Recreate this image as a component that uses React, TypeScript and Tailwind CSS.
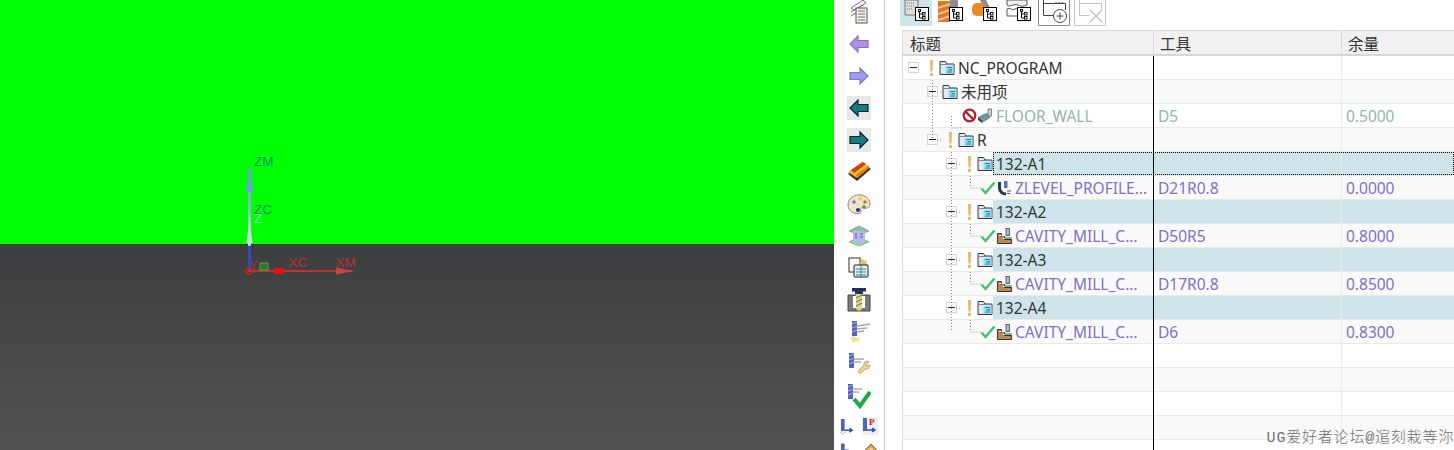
const FONT = 'font-["Noto_Sans","Noto_Sans_CJK_SC",sans-serif]'

type TNode = {
  title: string
  tool?: string
  stock?: string
  depth: number
  kind: 'folder' | 'op' | 'empty'
  warn?: boolean
  opIcon?: 'floor' | 'zlevel' | 'cavity'
  state?: 'ok' | 'blocked'
  active?: boolean
}

const nodes: TNode[] = [
  { title: 'NC_PROGRAM', depth: 0, kind: 'folder', warn: true },
  { title: '未用项', depth: 1, kind: 'folder' },
  { title: 'FLOOR_WALL', tool: 'D5', stock: '0.5000', depth: 3, kind: 'op', opIcon: 'floor', state: 'blocked' },
  { title: 'R', depth: 1, kind: 'folder', warn: true },
  { title: '132-A1', depth: 2, kind: 'folder', warn: true, active: true },
  { title: 'ZLEVEL_PROFILE...', tool: 'D21R0.8', stock: '0.0000', depth: 4, kind: 'op', opIcon: 'zlevel', state: 'ok' },
  { title: '132-A2', depth: 2, kind: 'folder', warn: true, active: true },
  { title: 'CAVITY_MILL_C...', tool: 'D50R5', stock: '0.8000', depth: 4, kind: 'op', opIcon: 'cavity', state: 'ok' },
  { title: '132-A3', depth: 2, kind: 'folder', warn: true, active: true },
  { title: 'CAVITY_MILL_C...', tool: 'D17R0.8', stock: '0.8500', depth: 4, kind: 'op', opIcon: 'cavity', state: 'ok' },
  { title: '132-A4', depth: 2, kind: 'folder', warn: true, active: true },
  { title: 'CAVITY_MILL_C...', tool: 'D6', stock: '0.8300', depth: 4, kind: 'op', opIcon: 'cavity', state: 'ok' },
  { title: '', depth: 0, kind: 'empty' },
  { title: '', depth: 0, kind: 'empty' },
  { title: '', depth: 0, kind: 'empty' },
  { title: '', depth: 0, kind: 'empty' },
]

const depthClass = ['pl-[5px]', 'pl-[24px]', 'pl-[43px]', 'pl-[59px]', 'pl-[77px]']

const Folder = () => (
  <svg width="16" height="16" viewBox="0 0 16 16" className="shrink-0">
    <path d="M1 14.500V1.500h5.500l1.500 2.500h7v10.500z" fill="#dfeaee" stroke="#2f3b40" strokeWidth="1" />
    <path d="M1 4.500h14" stroke="#6f8790" />
    <rect x="6.500" y="6" width="8" height="8" fill="#a4d8e8" />
    <path d="M8 7.500h5M9.500 9.800h3.500M8 12h5" stroke="#0f8ab4" strokeWidth="1.200" />
  </svg>
)

const Warn = () => (
  <svg width="5" height="18" viewBox="0 0 5 18" className="shrink-0">
    <path d="M1 1h3l-.4 11.500H1.400z" fill="#efb56b" />
    <rect x="1" y="14" width="3" height="3" fill="#efb56b" />
  </svg>
)

const Toggle = () => (
  <span className="flex h-[11px] w-[11px] shrink-0 items-center justify-center border border-[#d4d4d4] bg-white">
    <span className="h-px w-[7px] bg-[#222]" />
  </span>
)

const Check = () => (
  <svg width="16" height="14" viewBox="0 0 16 14" className="shrink-0">
    <path d="M1.500 7.500l4 4.500L14.500 1.500" fill="none" stroke="#3fc468" strokeWidth="2.400" />
  </svg>
)

const Blocked = () => (
  <svg width="15" height="15" viewBox="0 0 15 15" className="shrink-0">
    <circle cx="7.500" cy="7.500" r="5.800" fill="#fff" stroke="#b3202c" strokeWidth="2.200" />
    <path d="M3.600 3.600l7.800 7.800" stroke="#b3202c" strokeWidth="2.200" />
  </svg>
)

const OpIcon = ({ type }: { type: TNode['opIcon'] }) => {
  if (type === 'floor') {
    return (
      <svg width="16" height="16" viewBox="0 0 16 16" className="shrink-0">
        <path d="M1 9l8-4 4 2-8 5z" fill="#5f9c9a" />
        <path d="M1 9v3l4 3v-3z" fill="#444" />
        <path d="M5 12v3l8-5V7z" fill="#7d8b8e" />
        <rect x="11" y="1" width="3.500" height="7" fill="#cfd3da" stroke="#555" strokeWidth=".7" />
      </svg>
    )
  }
  if (type === 'zlevel') {
    return (
      <svg width="15" height="16" viewBox="0 0 15 16" className="shrink-0">
        <path d="M2.500 2v6c0 3.500 3 6 6.500 6" fill="none" stroke="#1d3c46" strokeWidth="3" />
        <rect x="7" y="1" width="3.500" height="7" fill="#5a6cc0" />
        <path d="M10 11h4M10 13.500h3" stroke="#555" />
      </svg>
    )
  }
  return (
    <svg width="15" height="16" viewBox="0 0 15 16" className="shrink-0">
      <path d="M.5 5.500h4v3h3v3h7v4H.5z" fill="#b98a4e" stroke="#333" />
      <path d="M2 7.500h4v3h3" fill="none" stroke="#e6cf9a" />
      <rect x="9" y=".5" width="3.500" height="7" fill="#b8bcc0" stroke="#444" strokeWidth=".8" />
      <path d="M8 9h6.500v2H8z" fill="#7fb08c" />
    </svg>
  )
}

const Row = ({ node, index }: { node: TNode; index: number }) => {
  const stripe = index % 2 === 0 ? 'bg-white' : 'bg-[#f9f9f9]'
  const hl = node.active ? 'bg-[#cde4ea]' : ''
  const color =
    node.state === 'blocked' ? 'text-[#93b5a6]' : node.state === 'ok' ? 'text-[#7b72cc]' : 'text-[#333]'

  return (
    <div className={`relative flex h-6 shrink-0 border-b border-[#e9e9e9] text-[15.500px] leading-[25px] ${stripe}`}>
      <div className={`flex w-[250px] shrink-0 items-center ${depthClass[node.depth]}`}>
        {node.kind === 'folder' && (
          <>
            <Toggle />
            {node.warn ? (
              <span className="ml-[10px] mr-[5px] flex">
                <Warn />
              </span>
            ) : (
              <span className="w-[4px]" />
            )}
            <Folder />
          </>
        )}
        {node.state === 'ok' && (
          <span className="flex items-center gap-px">
            <Check />
            <OpIcon type={node.opIcon} />
          </span>
        )}
        {node.state === 'blocked' && (
          <span className="flex items-center">
            <Blocked />
            <OpIcon type={node.opIcon} />
          </span>
        )}
        {node.kind !== 'empty' && (
          <span className={`h-full flex-1 whitespace-nowrap pl-[3px] ${color} ${hl}`}>{node.title}</span>
        )}
      </div>
      <div className={`w-[188px] shrink-0 pl-[5px] ${color} ${hl}`}>{node.tool}</div>
      <div className={`flex-1 border-l border-[#ebebeb] pl-[4px] ${color} ${hl}`}>{node.stock}</div>
      {node.title === '132-A1' && (
        <span className="absolute inset-y-0 left-[90px] right-0 border border-dotted border-black" />
      )}
    </div>
  )
}

// dotted branch lines of the tree, drawn in the coordinates of the table body
const Connectors = () => (
  <svg className="absolute left-0 top-0" width="120" height="300" fill="none" stroke="#888" strokeDasharray="1 2">
    <path d="M10.500 12h5M29.500 24v60M34 36h5M34 84h5" />
    <path d="M48.500 60v12H59" />
    <path d="M48.500 96v180M53 108h5M53 156h5M53 204h5M53 252h5" />
    <path d="M67.500 120v12H78M67.500 168v12H78M67.500 216v12H78M67.500 264v12H78" />
  </svg>
)

const TreeBadge = () => (
  <span className="absolute bottom-[5px] right-[3px] flex h-[14px] w-[14px] items-center justify-center border border-black bg-white">
    <svg width="8" height="11" viewBox="0 0 8 11" fill="none" stroke="#111">
      <rect x=".5" y=".5" width="2" height="2" />
      <rect x="4.500" y="3.500" width="2.500" height="2.500" />
      <rect x="4.500" y="7.500" width="2.500" height="2.500" />
      <path d="M1.500 3v6h3M1.500 5h3" />
    </svg>
  </span>
)

const TopTool = ({ active, children }: { active?: boolean; children: React.ReactNode }) => (
  <div className={`relative mr-[2px] h-[26px] w-[32px] shrink-0 overflow-hidden ${active ? 'bg-[#cde4ea]' : ''}`}>
    {children}
    <TreeBadge />
  </div>
)

const TopToolbar = () => (
  <div className="flex h-[26px] items-start pl-[15px]">
    <TopTool active>
      <svg className="absolute left-[4px] top-0" width="20" height="20" viewBox="0 0 20 20">
        <path d="M1 0h13v10l-3 5H1z" fill="#ddd" stroke="#777" />
        <path d="M3 3h8M3 6h8M3 9h6" stroke="#777" strokeDasharray="1 1" />
      </svg>
    </TopTool>
    <TopTool>
      <svg className="absolute left-[4px] top-0" width="20" height="24" viewBox="0 0 20 24">
        <rect x="12" y="0" width="8" height="8" fill="#8c8c8c" />
        <rect x="0" y="1" width="12" height="21" fill="#d97a2b" />
        <path d="M0 8l12-4M0 14l12-4M0 20l12-4" stroke="#f3c08a" strokeWidth="2" />
      </svg>
    </TopTool>
    <TopTool>
      <svg className="absolute left-[4px] top-0" width="24" height="24" viewBox="0 0 24 24">
        <path d="M8 0h6l7 14-5 3z" fill="#8b8b8b" />
        <rect x="0" y="3" width="14" height="13" rx="5" fill="#ea8a22" />
      </svg>
    </TopTool>
    <TopTool>
      <svg className="absolute left-[4px] top-0" width="24" height="20" viewBox="0 0 24 20" fill="none" stroke="#555">
        <path d="M1 0v5c3 3 7-2 11 0s6 1 9 0V0z" fill="#eee" />
        <path d="M1 9c3-2 5 2 8 0s5 2 11 0M1 9v7h20V9" />
      </svg>
    </TopTool>
    <svg className="ml-[2px] shrink-0" width="32" height="26" viewBox="0 0 32 26" fill="none" stroke="#444">
      <path d="M.5 0v25.500h31V0" stroke="#8a8a8a" />
      <path d="M5.500 0v15.500h10M5.500 3.500h22V10" />
      <path d="M18 3V1M21 3V1M24 3V1" strokeDasharray="1 1" />
      <circle cx="22" cy="16" r="6.500" fill="#fff" />
      <path d="M18.500 16h7M22 12.500v7" />
    </svg>
    <svg className="ml-[4px] shrink-0" width="32" height="26" viewBox="0 0 32 26" fill="none" stroke="#c4c4c4">
      <path d="M.5 0v25.500h31V0" />
      <path d="M5.500 0v15.500h10M5.500 3.500h22V10" />
      <path d="M16 10l12 12M28 10L16 22" strokeWidth="1.500" />
    </svg>
  </div>
)

const Side = ({ bg, children }: { bg?: boolean; children: React.ReactNode }) => (
  <div className="flex h-8 shrink-0 items-center justify-center">
    <span className={`flex h-[24px] w-[24px] items-center justify-center ${bg ? 'bg-[#e8e8e8]' : ''}`}>{children}</span>
  </div>
)

const Arrow = ({ dir, fill, stroke }: { dir: 'l' | 'r'; fill: string; stroke: string }) => (
  <svg width="20" height="18" viewBox="0 0 20 18">
    <path
      d={dir === 'l' ? 'M1 9l8-8v4.500h10v7H9V17z' : 'M19 9l-8-8v4.500H1v7h10V17z'}
      fill={fill}
      stroke={stroke}
      strokeWidth="1.200"
    />
  </svg>
)

const Mill = ({ x = 3 }: { x?: number }) => (
  <>
    <rect x={x} y="1" width="5" height="15" fill="#5266b8" />
    <path d={`M${x} 4l5-2M${x} 8l5-2M${x} 12l5-2`} stroke="#a9b4e6" />
  </>
)

const SideToolbar = () => (
  <div className="flex w-[51px] shrink-0 flex-col overflow-hidden border-r border-[#c9c9c9] bg-white">
    <div className="-mt-1 flex flex-col">
      <Side>
        <svg width="20" height="24" viewBox="0 0 20 24" fill="none">
          <path d="M2 8l12-8 3 3-12 7zM2 12l12-7M2 16l12-7" stroke="#8a5aa0" />
          <rect x="7" y="8" width="11" height="15" fill="#f2efe6" stroke="#555" />
          <path d="M9 11h7M9 14h7M9 17h7M9 20h7" stroke="#777" />
        </svg>
      </Side>
      <Side>
        <Arrow dir="l" fill="#b08fe8" stroke="#8a70c0" />
      </Side>
      <Side>
        <Arrow dir="r" fill="#9c9cee" stroke="#7c7cc4" />
      </Side>
      <Side bg>
        <Arrow dir="l" fill="#0f7f80" stroke="#123" />
      </Side>
      <Side bg>
        <Arrow dir="r" fill="#0f7f80" stroke="#123" />
      </Side>
      <Side>
        <svg width="24" height="22" viewBox="0 0 24 22">
          <path d="M1 13L15 2l9 6-14 12z" fill="#333" />
          <path d="M1 11L15 1l8 5-13 11z" fill="#f0c020" />
          <path d="M4 9l12-8 3 2L7 12z" fill="#d93a1e" />
          <path d="M9 14l12-9 2 1-13 11z" fill="#e87a1c" />
        </svg>
      </Side>
      <Side>
        <svg width="24" height="22" viewBox="0 0 24 22">
          <path d="M1 12C1 5 8 1 14 2c6 1 9 5 9 9s-4 5-6 4-4 0-3 3-4 3-7 2-6-4-6-8z" fill="#f3e2c6" stroke="#9a8a78" />
          <circle cx="7" cy="9" r="1.800" fill="#4a90c8" />
          <circle cx="13" cy="6" r="1.800" fill="#e8d040" />
          <circle cx="18" cy="9" r="1.800" fill="#e07030" />
          <circle cx="17" cy="14" r="1.800" fill="#40a050" />
          <circle cx="11" cy="17" r="2" fill="#2030a0" />
        </svg>
      </Side>
      <Side>
        <svg width="24" height="24" viewBox="0 0 24 24">
          <path d="M2 7l10-5 10 5-10 4z" fill="#8cc09c" stroke="#5a9070" strokeWidth=".6" />
          <path d="M2 18l10-5 10 5-10 4z" fill="#a4d0b0" stroke="#5a9070" strokeWidth=".6" />
          <rect x="6" y="7" width="12" height="11" rx="2" fill="#b8b8ee" />
          <path d="M9 9v6M13 10h3M13 13h3" stroke="#5a5ab8" />
        </svg>
      </Side>
      <Side>
        <svg width="22" height="22" viewBox="0 0 22 22">
          <rect x="1" y="1" width="11" height="14" fill="#fff" stroke="#333" />
          <path d="M14 1l2 3 3-1-1 3 3 2-5 2-4-3z" fill="#d6c26a" />
          <rect x="6" y="8" width="14" height="12" rx="1" fill="#dbeef0" stroke="#222" />
          <path d="M8 12h10M8 15h10M8 18h10M13 9v10" stroke="#3a8a90" />
        </svg>
      </Side>
      <Side>
        <svg width="24" height="24" viewBox="0 0 24 24">
          <path d="M1 7h22v16H1z" fill="#7a7a7a" stroke="#444" />
          <rect x="6" y="8" width="12" height="12" fill="#fff" />
          <rect x="5" y="0" width="14" height="3.500" fill="#222a70" />
          <rect x="8" y="3" width="8" height="3" fill="#333" />
          <path d="M9 6h6v15l-3 2-3-2z" fill="#e4d87a" />
          <path d="M9 10l6-3M9 14l6-3M9 18l6-3" stroke="#666" />
        </svg>
      </Side>
      <Side>
        <svg width="24" height="24" viewBox="0 0 24 24" fill="none">
          <Mill x={5} />
          <path d="M10 6l13-2M10 9l10-1M10 12l7-1" stroke="#aaa" strokeWidth="1.500" />
          <path d="M3 18l4-2 2 2 4-1-2 3 2 2-5-1-2 2-1-3z" fill="#e8de90" />
        </svg>
      </Side>
      <Side>
        <svg width="24" height="24" viewBox="0 0 24 24" fill="none">
          <Mill x={2} />
          <path d="M7 7l10 0M7 10l7 0" stroke="#aaa" strokeWidth="1.500" />
          <path d="M12 18l5-5c-1-3 3-5 5-3l-3 2 1 2 3-1c0 3-3 5-5 4l-4 4c-2 1-3-1-2-3z" fill="#eed68a" stroke="#a58a50" strokeWidth=".7" />
        </svg>
      </Side>
      <Side>
        <svg width="24" height="26" viewBox="0 0 24 26" fill="none">
          <Mill x={1} />
          <path d="M6 6h9M6 9h6" stroke="#aaa" strokeWidth="1.500" />
          <path d="M7 16l6 7L23 9" stroke="#20a840" strokeWidth="4" />
        </svg>
      </Side>
    </div>
    <div className="flex h-[26px] shrink-0 items-center justify-center gap-[7px] pt-[2px]">
      <svg width="15" height="17" viewBox="0 0 16 18" fill="none">
        <rect x="1" y="1" width="4" height="13" fill="#5266b8" />
        <path d="M5 13h8m-3-2l3 2-3 2" stroke="#3050b0" strokeWidth="1.500" />
        <path d="M0 15l3 2 3-2" stroke="#cdbb6a" />
      </svg>
      <svg width="16" height="18" viewBox="0 0 16 18" fill="none">
        <rect width="16" height="18" fill="#eee" />
        <rect x="1" y="1" width="4" height="13" fill="#5266b8" />
        <text x="7" y="8" fontSize="9" fontWeight="700" fill="#c01818" fontFamily="Liberation Serif">P</text>
        <path d="M5 13h8m-3-2l3 2-3 2" stroke="#3050b0" strokeWidth="1.500" />
      </svg>
    </div>
    <div className="flex h-[24px] shrink-0 items-start justify-center gap-[7px] pt-[4px]">
      <svg width="15" height="20" viewBox="0 0 16 20" fill="none">
        <rect x="1" y="1" width="4" height="13" fill="#5266b8" />
        <path d="M5 8h4M9 12h6" stroke="#3050b0" strokeWidth="1.500" />
      </svg>
      <svg width="16" height="20" viewBox="0 0 16 20">
        <path d="M1 10l8-8 6 6-8 8z" fill="#e89a30" stroke="#777" />
        <path d="M4 10l5-5 3 3-5 5z" fill="#f4d8a0" />
      </svg>
    </div>
  </div>
)

const Axes = () => (
  <svg className="absolute left-[230px] top-[150px] blur-[0.4px]" width="140" height="130" viewBox="230 150 140 130" fontFamily="Liberation Sans" fontSize="13.500">
    <defs>
      <linearGradient id="zaxis" x1="0" y1="0" x2="0" y2="1">
        <stop offset="0" stopColor="#6f9fe0" />
        <stop offset="0.4" stopColor="#86bcc8" />
        <stop offset="0.75" stopColor="#d8d8d8" />
        <stop offset="0.76" stopColor="#2c4fc0" />
        <stop offset="1" stopColor="#2c4fc0" />
      </linearGradient>
    </defs>
    <rect x="248" y="168" width="3" height="103" fill="url(#zaxis)" />
    <path d="M249.500 168l-3.500 24h7z" fill="#6f9fe0" />
    <path d="M249.500 219l-3 24h6z" fill="#d0dcdc" />
    <text x="254" y="166" fill="#0d8a68">ZM</text>
    <text x="254" y="214" fill="#0d8a68">ZC</text>
    <text x="254" y="223" fill="#78e8a0">Z</text>
    <path d="M248 271h104" stroke="#e03030" strokeWidth="1.500" />
    <path d="M354 271l-18-3.500v7z" fill="#d04040" />
    <path d="M274 268h10v6h-10z" fill="#e81010" />
    <circle cx="249" cy="271" r="3" fill="none" stroke="#d82020" strokeWidth="1.500" />
    <text x="250" y="270" fill="#b03040" fontSize="12">Y</text>
    <rect x="260" y="263" width="8" height="7" fill="#2e7a2e" stroke="#60b060" strokeWidth=".8" />
    <text x="289" y="267" fill="#c83030">XC</text>
    <text x="336" y="267" fill="#c83030">XM</text>
  </svg>
)

const App = () => {
  return (
    <div className={`relative flex h-[450px] w-[1454px] overflow-hidden bg-white ${FONT}`}>
      <div className="relative flex w-[834px] shrink-0 flex-col">
        <div className="h-[244px] bg-[#00ff00]" />
        <div className="flex-1 bg-gradient-to-b from-[#3d3e40] to-[#515254]" />
        <Axes />
      </div>
      <SideToolbar />
      <div className="flex min-w-0 flex-1 flex-col">
        <TopToolbar />
        <div className="ml-[17px] mt-[4px] flex min-h-0 flex-1 flex-col border-l border-t border-[#d9d9d9]">
          <div className="flex h-[25px] shrink-0 border-b-2 border-[#d6d6d6] bg-[#f0f0f0] text-[15.500px] leading-[26px] text-[#333]">
            <div className="w-[250px] shrink-0 pl-[7px]">标题</div>
            <div className="w-[188px] shrink-0 border-l border-[#d9d9d9] pl-[6px]">工具</div>
            <div className="flex-1 border-l border-[#d9d9d9] pl-[6px]">余量</div>
          </div>
          <div className="relative flex min-h-0 flex-1 flex-col overflow-hidden">
            {nodes.map((node, index) => (
              <Row key={index} node={node} index={index} />
            ))}
            <Connectors />
            <span className="absolute inset-y-0 left-[250px] w-px bg-black" />
          </div>
        </div>
      </div>
      <span className="absolute bottom-[2px] right-0 whitespace-nowrap font-['Liberation_Mono','Noto_Sans_CJK_SC',monospace] text-[15px] font-light leading-[18px] tracking-[0.8px] text-[#707070]">
        UG爱好者论坛@逭刻栽等沵
      </span>
    </div>
  )
}

export default App
